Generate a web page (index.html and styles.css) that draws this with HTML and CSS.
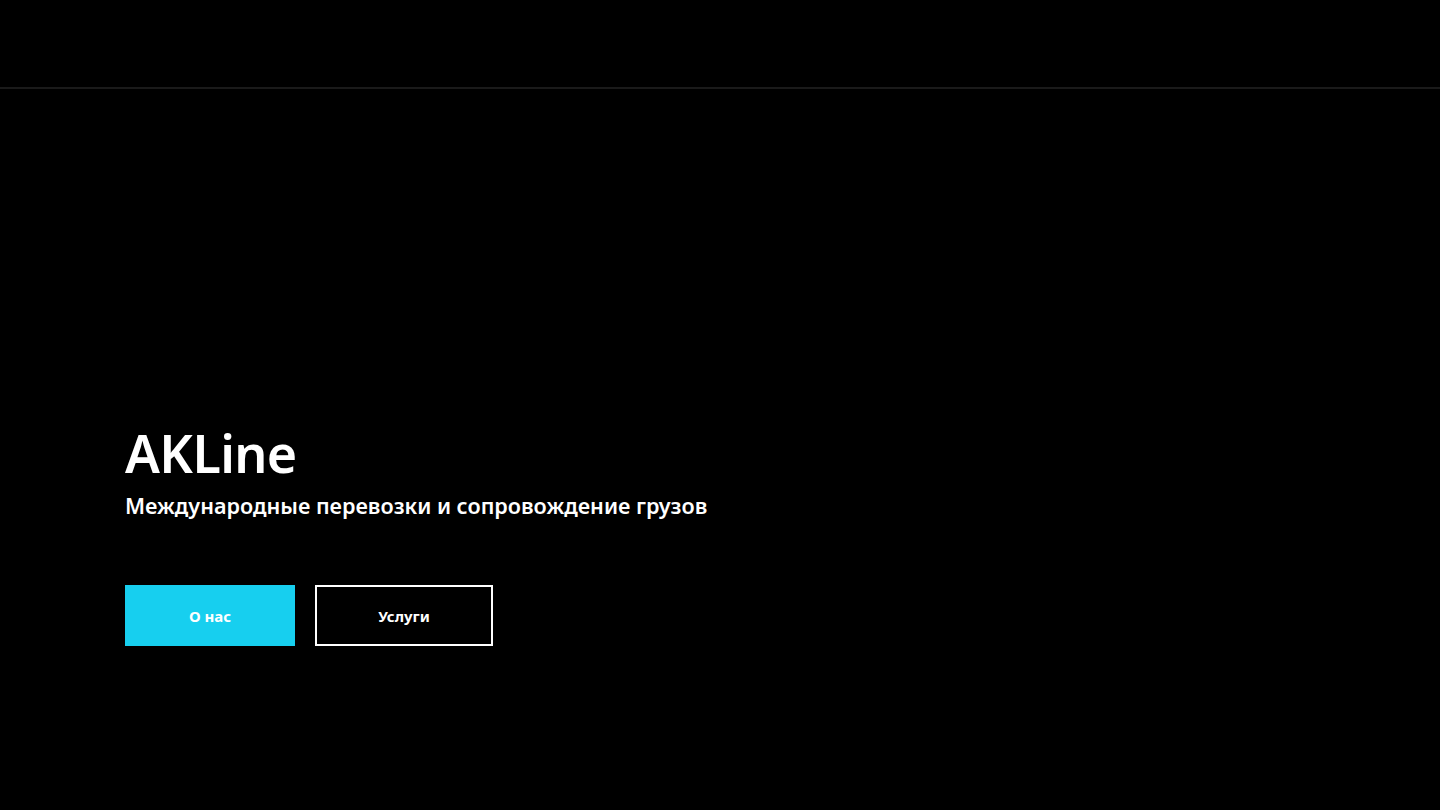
FILE: index.html
```html
<!DOCTYPE html>
<html lang="ru">
<head>
    <meta charset="UTF-8">
    <meta name="viewport" content="width=device-width, initial-scale=1.0">
    <title>AKLine - Международные перевозки</title>
    <link rel="stylesheet" href="styles.css">
</head>
<body>
    <header class="header"></header>

    <main class="hero">
        <div class="hero-content">
            <h1 class="hero-title">AKLine</h1>
            <p class="hero-subtitle">Международные перевозки и сопровождение грузов</p>

            <div class="hero-actions">
                <a href="#about" class="btn btn-primary">О нас</a>
                <a href="#services" class="btn btn-outline">Услуги</a>
            </div>
        </div>
    </main>
</body>
</html>
```

FILE: styles.css
```css
* {
    margin: 0;
    padding: 0;
    box-sizing: border-box;
}

body {
    font-family: 'Noto Sans', 'Open Sans', sans-serif;
    background: #000;
    color: #fff;
    min-height: 100vh;
    display: flex;
    flex-direction: column;
}

.header {
    height: 89px;
    border-bottom: 2px solid #1a1a1a;
}

.hero {
    flex: 1;
    padding: 338px 125px 0;
}

.hero-title {
    font-size: 52px;
    font-weight: 600;
    line-height: 1;
    letter-spacing: -0.6px;
}

.hero-subtitle {
    margin-top: 12px;
    font-size: 21.6px;
    font-weight: 600;
    line-height: 1.35;
}

.hero-actions {
    display: flex;
    gap: 20px;
    margin-top: 65px;
}

.btn {
    display: flex;
    align-items: center;
    justify-content: center;
    height: 61px;
    font-size: 15px;
    font-weight: 700;
    color: #fff;
    text-decoration: none;
}

.btn-primary {
    width: 170px;
    background: #17cfef;
}

.btn-outline {
    width: 178px;
    border: 2px solid #fff;
}
```
